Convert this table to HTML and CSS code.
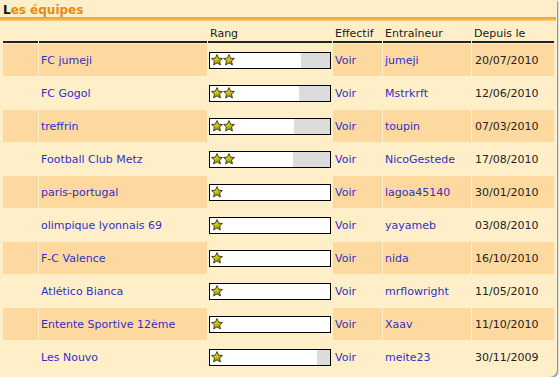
FILE: index.html
```html
<!DOCTYPE html>
<html lang="fr">
<head>
<meta charset="utf-8">
<title>Les équipes</title>
<link rel="stylesheet" href="styles.css">
</head>
<body>
<svg width="0" height="0" class="defs">
  <defs>
    <linearGradient id="sg" x1="0" y1="0" x2="0.6" y2="1">
      <stop offset="0" stop-color="#f8f08a"/>
      <stop offset="0.5" stop-color="#d8c818"/>
      <stop offset="1" stop-color="#9a8a00"/>
    </linearGradient>
    <symbol id="star" viewBox="0 0 12 12">
      <path d="M6 0.6 L7.55 4.2 L11.4 4.5 L8.5 7 L9.4 10.9 L6 8.85 L2.6 10.9 L3.5 7 L0.6 4.5 L4.45 4.2 Z" fill="url(#sg)" stroke="#404010" stroke-width="1" stroke-linejoin="round"/>
    </symbol>
  </defs>
</svg>
<div class="panel">
  <h1 class="title"><span class="first">L</span>es équipes</h1>
  <div class="rule"></div>
  <table class="teams">
    <thead>
      <tr>
        <th class="c1"></th>
        <th class="c2"></th>
        <th class="c3">Rang</th>
        <th class="c4">Effectif</th>
        <th class="c5">Entraîneur</th>
        <th class="c6">Depuis le</th>
      </tr>
    </thead>
    <tbody>
      <tr class="odd">
        <td></td><td><a>FC jumeji</a></td>
        <td class="rang"><div class="bar"><div class="fill" style="width:76%"><svg class="st"><use href="#star"/></svg><svg class="st"><use href="#star"/></svg></div></div></td>
        <td><a>Voir</a></td><td><a>jumeji</a></td><td class="date">20/07/2010</td>
      </tr>
      <tr>
        <td></td><td><a>FC Gogol</a></td>
        <td class="rang"><div class="bar"><div class="fill" style="width:74%"><svg class="st"><use href="#star"/></svg><svg class="st"><use href="#star"/></svg></div></div></td>
        <td><a>Voir</a></td><td><a>Mstrkrft</a></td><td class="date">12/06/2010</td>
      </tr>
      <tr class="odd">
        <td></td><td><a>treffrin</a></td>
        <td class="rang"><div class="bar"><div class="fill" style="width:70%"><svg class="st"><use href="#star"/></svg><svg class="st"><use href="#star"/></svg></div></div></td>
        <td><a>Voir</a></td><td><a>toupin</a></td><td class="date">07/03/2010</td>
      </tr>
      <tr>
        <td></td><td><a>Football Club Metz</a></td>
        <td class="rang"><div class="bar"><div class="fill" style="width:69%"><svg class="st"><use href="#star"/></svg><svg class="st"><use href="#star"/></svg></div></div></td>
        <td><a>Voir</a></td><td><a>NicoGestede</a></td><td class="date">17/08/2010</td>
      </tr>
      <tr class="odd">
        <td></td><td><a>paris-portugal</a></td>
        <td class="rang"><div class="bar"><div class="fill" style="width:100%"><svg class="st"><use href="#star"/></svg></div></div></td>
        <td><a>Voir</a></td><td><a>lagoa45140</a></td><td class="date">30/01/2010</td>
      </tr>
      <tr>
        <td></td><td><a>olimpique lyonnais 69</a></td>
        <td class="rang"><div class="bar"><div class="fill" style="width:100%"><svg class="st"><use href="#star"/></svg></div></div></td>
        <td><a>Voir</a></td><td><a>yayameb</a></td><td class="date">03/08/2010</td>
      </tr>
      <tr class="odd">
        <td></td><td><a>F-C Valence</a></td>
        <td class="rang"><div class="bar"><div class="fill" style="width:100%"><svg class="st"><use href="#star"/></svg></div></div></td>
        <td><a>Voir</a></td><td><a>nida</a></td><td class="date">16/10/2010</td>
      </tr>
      <tr>
        <td></td><td><a>Atlético Bianca</a></td>
        <td class="rang"><div class="bar"><div class="fill" style="width:100%"><svg class="st"><use href="#star"/></svg></div></div></td>
        <td><a>Voir</a></td><td><a>mrflowright</a></td><td class="date">11/05/2010</td>
      </tr>
      <tr class="odd">
        <td></td><td><a>Entente Sportive 12ème</a></td>
        <td class="rang"><div class="bar"><div class="fill" style="width:100%"><svg class="st"><use href="#star"/></svg></div></div></td>
        <td><a>Voir</a></td><td><a>Xaav</a></td><td class="date">11/10/2010</td>
      </tr>
      <tr>
        <td></td><td><a>Les Nouvo</a></td>
        <td class="rang"><div class="bar"><div class="fill" style="width:89%"><svg class="st"><use href="#star"/></svg></div></div></td>
        <td><a>Voir</a></td><td><a>meite23</a></td><td class="date">30/11/2009</td>
      </tr>
    </tbody>
  </table>
</div>
</body>
</html>
```

FILE: styles.css
```css
html, body {
  margin: 0;
  padding: 0;
  background: #ffffff;
}
body {
  font-family: "DejaVu Sans", Verdana, sans-serif;
  font-size: 11px;
  color: #222222;
}
.defs {
  position: absolute;
  width: 0;
  height: 0;
}
.panel {
  width: 557px;
  height: 377px;
  background: #ffefc8;
  border-bottom-right-radius: 7px;
  box-shadow: 1px 1px 2px rgba(0, 0, 0, 0.55);
  overflow: hidden;
}
.title {
  margin: 0;
  padding: 3px 0 0 3px;
  height: 14px;
  font-size: 12px;
  font-weight: bold;
  line-height: 14px;
  color: #e58a12;
}
.title .first {
  color: #111111;
}
.rule {
  height: 4px;
  width: 556px;
  background: linear-gradient(to bottom, #f2a030, #f5b350 60%, #fad494);
}
.teams {
  margin: 2px 0 0 2px;
  border-collapse: separate;
  border-spacing: 1px;
}
.teams th {
  height: 15px;
  padding: 2px 2px 0;
  text-align: left;
  font-weight: normal;
  color: #222222;
  border-bottom: 2px solid #222222;
  vertical-align: middle;
}
.teams .c1 { width: 31px; }
.teams .c2 { width: 164px; }
.teams .c3 { width: 120px; }
.teams .c4 { width: 45px; }
.teams .c5 { width: 84px; }
.teams .c6 { width: 78px; }
.teams td {
  height: 32px;
  padding: 0 2px;
  vertical-align: middle;
}
.teams tr.odd td {
  background: #fdd9a0;
}
.teams tr.odd td.rang {
  background: transparent;
}
.teams a {
  color: #3030c8;
  text-decoration: none;
}
.teams td.date {
  padding-left: 3px;
  color: #222222;
}
.teams td.rang {
  padding: 0 0 0 1px;
}
.bar {
  width: 120px;
  height: 15px;
  border: 1px solid #000000;
  background: #dcdcdc;
  display: flex;
}
.fill {
  height: 15px;
  background: #ffffff;
  display: flex;
  align-items: center;
  padding-left: 1px;
  box-sizing: border-box;
}
.st {
  width: 12px;
  height: 12px;
}
```
